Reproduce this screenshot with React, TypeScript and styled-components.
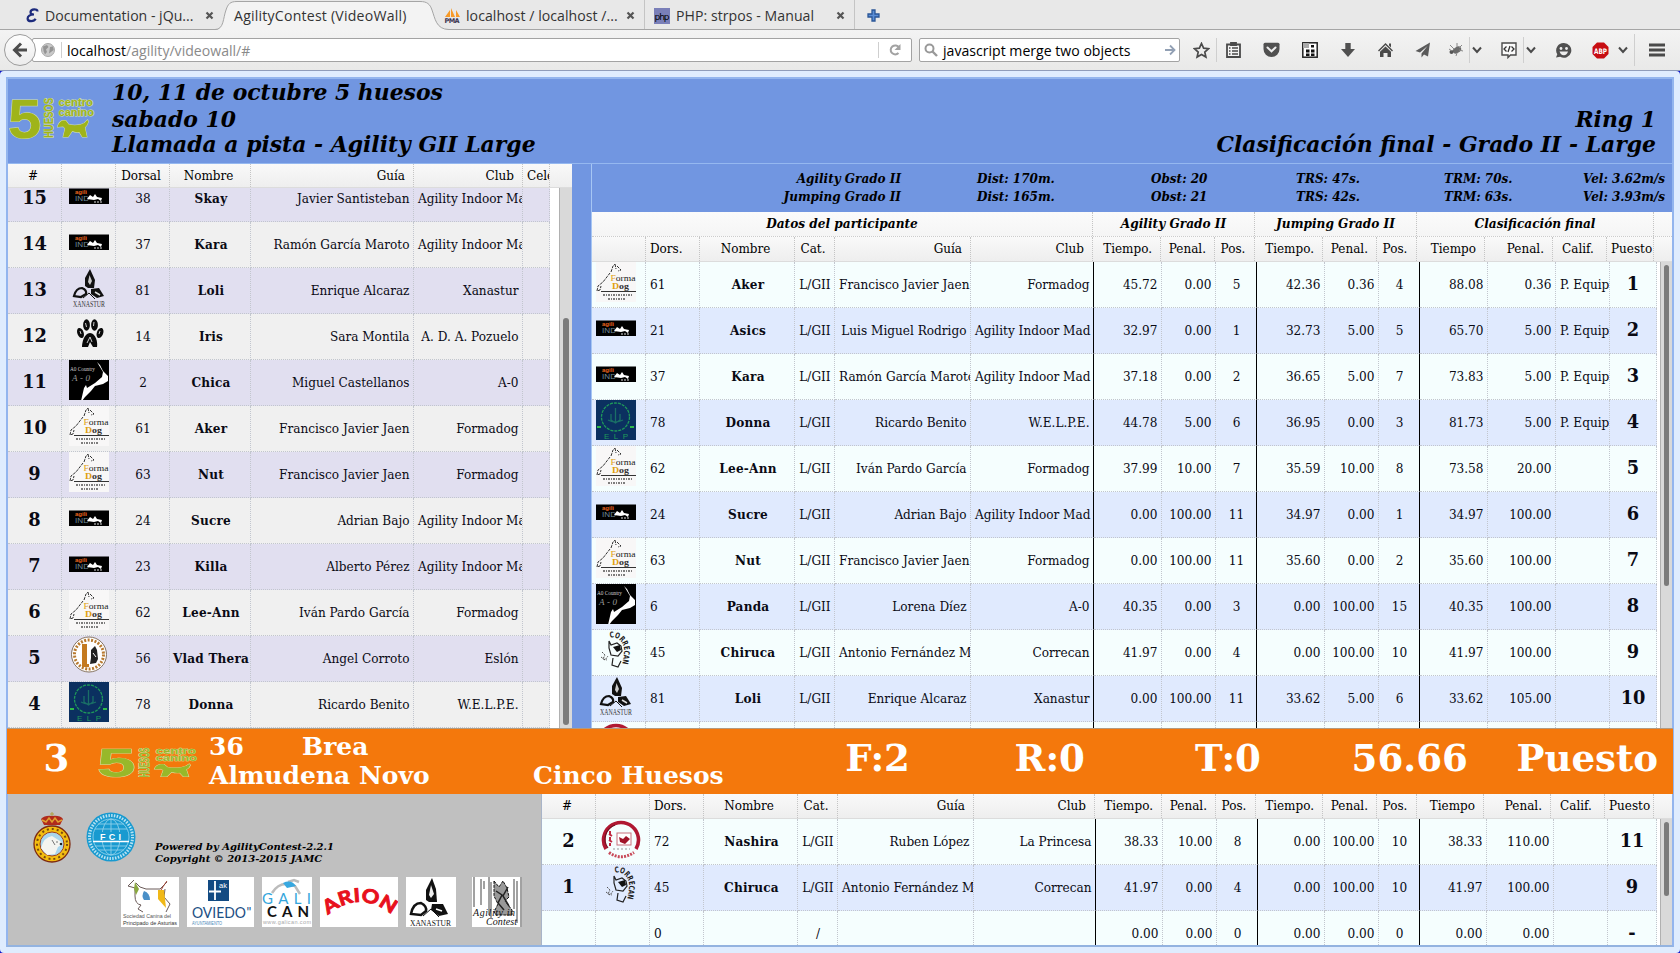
import React from 'react';
import styled, { createGlobalStyle, css } from 'styled-components';

const Global = createGlobalStyle`
  * { box-sizing: border-box; }
  html, body { margin: 0; padding: 0; }
  body { width: 1680px; height: 953px; overflow: hidden; background: #0a14c8; font-family: "DejaVu Serif", serif; }
  svg { display: block; flex: none; font-style: normal; }
`;

/* ---------- browser chrome ---------- */

const Chrome = styled.div`
  height: 71px;
  font-family: "Open Sans", "Noto Sans", sans-serif;
  font-size: 14.1px;
  color: #333;
`;
const TabBar = styled.div`
  height: 30px;
  display: flex;
  background: #e8e8e8;
  border-bottom: 1px solid #a5a5a5;
`;
const Tab = styled.div<{ $w: number; $left: number; $sep?: boolean }>`
  position: relative;
  width: ${p => p.$w}px;
  height: 29px;
  padding-left: ${p => p.$left}px;
  display: flex;
  align-items: center;
  white-space: nowrap;
  padding-top: 2px;
  ${p => p.$sep && css`border-right: 1px solid #c4c4c4;`}
`;
const TabIcon = styled.span<{ $w?: number }>`
  width: ${p => p.$w ?? 20}px;
  display: flex;
`;
const TabTitle = styled.span<{ $w: number; $ls?: number }>`
  width: ${p => p.$w}px;
  letter-spacing: ${p => p.$ls ?? 0}px;
`;
const TabShape = styled.svg`
  position: absolute;
  left: 0;
  top: 0;
  & + span { position: relative; }
`;
const Toolbar = styled.div`
  height: 41px;
  display: flex;
  align-items: center;
  background: linear-gradient(#f3f3f3, #e9e9e8);
  border-bottom: 1px solid #8f9cba;
  padding-left: 4px;
`;
const BackButton = styled.div`
  position: relative;
  z-index: 1;
  flex: none;
  width: 32px;
  height: 32px;
  margin-right: -4px;
  border-radius: 50%;
  border: 1px solid #9c9c9c;
  background: linear-gradient(#fdfdfd, #ececec);
  display: flex;
  align-items: center;
  justify-content: center;
`;
const UrlBox = styled.div`
  flex: none;
  width: 880px;
  height: 24px;
  border: 1px solid #a3a3a3;
  border-radius: 2px;
  background: #fff;
  display: flex;
  align-items: center;
  padding-left: 8px;
  color: #8a8a8a;
  b { color: #000; font-weight: 400; }
`;
const SearchBox = styled(UrlBox)`
  width: 261px;
  margin-left: 7px;
  padding-left: 4px;
  color: #000;
`;
const Sep = styled.i<{ $ml?: number; $mr?: number; $h?: number }>`
  width: 1px;
  height: ${p => p.$h ?? 16}px;
  background: #cfcfcf;
  margin-left: ${p => p.$ml ?? 0}px;
  margin-right: ${p => p.$mr ?? 0}px;
`;
const UrlText = styled.span`
  flex: 1;
  white-space: nowrap;
`;
const Tools = styled.div`
  display: flex;
  align-items: center;
`;
const Tool = styled.span<{ $w: number; $pl?: number }>`
  flex: none;
  width: ${p => p.$w}px;
  padding-left: ${p => p.$pl ?? 0}px;
  display: flex;
  justify-content: center;
`;

const CloseIcon = () => (
  <svg width="9" height="9" viewBox="0 0 9 9"><path d="M1.5 1.5l6 6M7.5 1.5l-6 6" stroke="#555" strokeWidth="2.2" /></svg>
);
const Chevron = () => (
  <svg width="10" height="8" viewBox="0 0 10 8"><path d="M1 1.5l4 4.5 4-4.5" fill="none" stroke="#4a4a4a" strokeWidth="2" /></svg>
);

function BrowserChrome() {
  return (
    <Chrome>
      <TabBar>
        <Tab $w={215} $left={25}>
          <TabIcon><svg width="14" height="15" viewBox="0 0 14 15"><path d="M12.500 3.500C12.500 .5 6 .5 5.500 4c-.1 1.800 1.500 2.500 3.500 2.500C5 6.500 2.500 8 2.600 10.600c.1 3.400 6.500 3.400 8 .2" fill="none" stroke="#1c2a7c" strokeWidth="2.200" /></svg></TabIcon>
          <TabTitle $w={160}>Documentation - jQu...</TabTitle>
          <CloseIcon />
        </Tab>
        <Tab $w={228} $left={19}>
          <TabShape width="236" height="30" viewBox="0 0 236 30">
            <path d="M0 30C9 30 8 18 11 10 13 4 15 1.500 22 1.500H205C212 1.500 215 4 217 10 220 18 221 29.500 234 29.500V30Z" fill="#f3f3f3" />
            <path d="M0 29.500C9 29.500 8 18 11 10 13 4 15 1.500 22 1.500H205C212 1.500 215 4 217 10 220 18 221 29.500 234 29.500" fill="none" stroke="#a5a5a5" />
          </TabShape>
          <TabTitle $w={182} $ls={0.22}>AgilityContest (VideoWall)</TabTitle>
          <CloseIcon />
        </Tab>
        <Tab $w={202} $left={1} $sep>
          <TabIcon $w={22}>
            <svg width="17" height="17" viewBox="0 0 17 17">
              <path d="M1 10L6 3v7zM7 10V1l4 9zM12 10V3l4 7z" fill="#f79a28" />
              <text x="0.500" y="16" fontSize="6.500" fontWeight="700" fontFamily="DejaVu Sans" fill="#3b3550" textLength="15">PMA</text>
            </svg>
          </TabIcon>
          <TabTitle $w={160} $ls={0.05}>localhost / localhost /...</TabTitle>
          <CloseIcon />
        </Tab>
        <Tab $w={210} $left={9} $sep>
          <TabIcon $w={22}>
            <svg width="16" height="16" viewBox="0 0 16 16">
              <rect width="16" height="16" fill="#7a7fb8" />
              <text x="0.500" y="11.500" fontSize="9" fontFamily="DejaVu Sans" fill="#000" textLength="15">php</text>
            </svg>
          </TabIcon>
          <TabTitle $w={160} $ls={0.05}>PHP: strpos - Manual</TabTitle>
          <CloseIcon />
        </Tab>
        <Tab $w={40} $left={12}>
          <svg width="13" height="13" viewBox="0 0 13 13"><path d="M5 1h3v4h4v3H8v4H5V8H1V5h4z" fill="#5c8fd6" stroke="#2a5696" strokeWidth="1.300" /></svg>
        </Tab>
      </TabBar>
      <Toolbar>
        <BackButton>
          <svg width="16" height="16" viewBox="0 0 16 16"><path d="M9 1.500L2.500 8 9 14.500M3 8h12" fill="none" stroke="#4c4c4c" strokeWidth="3" /></svg>
        </BackButton>
        <UrlBox>
          <svg width="14" height="14" viewBox="0 0 14 14">
            <circle cx="7" cy="7" r="6.500" fill="#c9c9c9" stroke="#aaa" />
            <path d="M2 3.500L6 2l1.500 2L5 6.500 6 9l-2 2.500L2.500 8zM9 4l3-.5.7 3.500L10 9l-2 1.500z" fill="#949494" />
          </svg>
          <Sep $ml={6} $mr={5} />
          <UrlText><b>localhost</b>/agility/videowall/#</UrlText>
          <Sep $mr={9} />
          <svg width="14" height="14" viewBox="0 0 14 14"><path d="M10.500 10A4.500 4.500 0 1 1 11 4.500" fill="none" stroke="#a2a2a2" strokeWidth="2" /><path d="M12.500 1v6h-6z" fill="#a2a2a2" /></svg>
          <Sep $ml={8} $h={0} />
        </UrlBox>
        <SearchBox>
          <svg width="14" height="14" viewBox="0 0 14 14"><circle cx="5.500" cy="5.500" r="4" fill="none" stroke="#999" strokeWidth="2" /><path d="M8.500 8.500l4.500 4.500" stroke="#999" strokeWidth="2.400" /></svg>
          <Sep $ml={4} $h={0} />
          <UrlText>javascript merge two objects</UrlText>
          <svg width="12" height="12" viewBox="0 0 12 12"><path d="M1 6h9M6 1.500L10.500 6 6 10.500" fill="none" stroke="#92a0b4" strokeWidth="1.800" /></svg>
          <Sep $ml={2} $h={0} />
        </SearchBox>
        <Tools>
          <Tool $w={36} $pl={7}>
            <svg width="17" height="17" viewBox="0 0 17 17"><path d="M8.500 1.500l2.100 4.700 5 .5-3.800 3.400 1.100 5-4.400-2.600-4.400 2.600 1.100-5L1.400 6.700l5-.5z" fill="none" stroke="#4a4a4a" strokeWidth="1.700" /></svg>
          </Tool>
          <Sep $h={24} />
          <Tool $w={32}>
            <svg width="15" height="16" viewBox="0 0 15 16"><path d="M1 2.500h13V15H1zM5 1h5v2H5z" fill="#f4f4f4" stroke="#4a4a4a" strokeWidth="1.800" /><path d="M3 6h1.500M6 6h6M3 9h1.500M6 9h6M3 12h1.500M6 12h6" stroke="#4a4a4a" strokeWidth="1.500" /></svg>
          </Tool>
          <Tool $w={44}>
            <svg width="17" height="16" viewBox="0 0 17 16"><path d="M2 .8h13q1.500 0 1.500 1.500V7a8 8 0 0 1-16 0V2.300Q.5.800 2 .8z" fill="#505050" /><path d="M4.500 5.500l4 3.800 4-3.800" fill="none" stroke="#eee" strokeWidth="2" strokeLinecap="round" /></svg>
          </Tool>
          <Tool $w={33}>
            <svg width="16" height="16" viewBox="0 0 16 16"><rect x=".8" y=".8" width="14.400" height="14.400" fill="#fff" stroke="#222" strokeWidth="1.500" /><path d="M1 1h6v5H1z" fill="#aaa" /><path d="M4 7.500h3.500v3H4zM9 7.500h3.500v3H9zM4 11.500h3.500V14H4zM9 11.500h3.500V14H9zM9 3h3v2.500H9z" fill="#111" /></svg>
          </Tool>
          <Tool $w={43}>
            <svg width="16" height="16" viewBox="0 0 16 16"><path d="M5.300 1h5.400v6H15l-7 8-7-8h4.300z" fill="#505050" /></svg>
          </Tool>
          <Tool $w={33}>
            <svg width="17" height="16" viewBox="0 0 17 16"><path d="M8.500 1L16 8.500l-1 1L8.500 3 2 9.500l-1-1z" fill="#4a4a4a" /><path d="M3 9.800L8.500 4.500 14 9.800V15h-3.500v-4h-4v4H3zM12 1.500h2v4l-2-2z" fill="#4a4a4a" /></svg>
          </Tool>
          <Tool $w={41}>
            <svg width="16" height="16" viewBox="0 0 16 16"><path d="M15 .5L.5 9l4.500 1.500L12.500 4l-6 7.500V15.500L9 12.500l4 2z" fill="#5a5a5a" /></svg>
          </Tool>
          <Tool $w={26}>
            <svg width="16" height="16" viewBox="0 0 16 16"><ellipse cx="9" cy="8" rx="4.500" ry="3" transform="rotate(-30 9 8)" fill="#6b6b6b" /><circle cx="3.500" cy="10" r="2" fill="#555" /><path d="M2 3l4 4M9 1v4M14 3l-3 3M15 9l-4-1M8 14l1-3M1 7l3 2" stroke="#888" /></svg>
          </Tool>
          <Sep $h={26} $mr={1} />
          <Tool $w={12}><Chevron /></Tool>
          <Tool $w={40} $pl={12}>
            <svg width="16" height="17" viewBox="0 0 16 17"><path d="M1 1h14v12H9.500L7 15.500V13H1z" fill="#fbfbfb" stroke="#4a4a4a" strokeWidth="1.400" /><path d="M5.500 4.500L3 7l2.500 2.500M10.500 4.500L13 7l-2.500 2.500M9 4L7 10" fill="none" stroke="#333" strokeWidth="1.300" /></svg>
          </Tool>
          <Sep $h={26} $mr={1} />
          <Tool $w={12}><Chevron /></Tool>
          <Tool $w={52}>
            <svg width="17" height="17" viewBox="0 0 17 17"><path d="M8.700 1a7.400 7.400 0 1 1-3.500 13.800L1 15.500l1.300-3.200A7.400 7.400 0 0 1 8.700 1z" fill="#505050" /><circle cx="6" cy="6.500" r="1.400" fill="#eee" /><circle cx="11.500" cy="6.500" r="1.400" fill="#eee" /><path d="M4.500 9.500h8.500q-1 3.700-4.200 3.700T4.500 9.500z" fill="#eee" /></svg>
          </Tool>
          <Tool $w={22}>
            <svg width="17" height="17" viewBox="0 0 17 17"><path d="M5 .5h7L16.500 5v7L12 16.500H5L.5 12V5z" fill="#c70d12" /><text x="2" y="11.500" fontSize="7.500" fontWeight="700" fontFamily="DejaVu Sans Condensed" fill="#fff" textLength="13" lengthAdjust="spacingAndGlyphs">ABP</text></svg>
          </Tool>
          <Tool $w={23}><Chevron /></Tool>
          <Sep $h={32} />
          <Tool $w={44}>
            <svg width="16" height="14" viewBox="0 0 16 14"><path d="M0 2h16M0 7h16M0 12h16" stroke="#4a4a4a" strokeWidth="3" /></svg>
          </Tool>
        </Tools>
      </Toolbar>
    </Chrome>
  );
}

/* ---------- club logos ---------- */

const HuesosLogo = ({ w, h, color }: { w: number; h: number; color: string }) => (
  <svg width={w} height={h} viewBox="0 0 86 42" preserveAspectRatio="none">
    <g fill={color} stroke="#d8e4a8" strokeWidth="1" paintOrder="stroke" fontFamily="Liberation Sans" fontWeight="700">
      <text x="0" y="40.500" fontSize="56" textLength="33" lengthAdjust="spacingAndGlyphs">5</text>
      <text transform="translate(44.500 41) rotate(-90)" fontSize="12.500" textLength="40" lengthAdjust="spacingAndGlyphs">HUESOS</text>
      <text x="50" y="9" fontSize="11.500" textLength="34" lengthAdjust="spacingAndGlyphs">centro</text>
      <text x="50" y="19" fontSize="11.500" textLength="35" lengthAdjust="spacingAndGlyphs">canino</text>
      <path d="M49 30q1-5 5-6.500l3 0 3 4q6 1.500 12 0 4-1 6.500-4.500l1 1.500q-1 4-3.500 6l2 9.500h-4.500l-3-5q-4 .5-7-1l-4 6h-5l2-8.500-2-2z" />
    </g>
  </svg>
);

const logos: Record<string, React.ReactNode> = {
  indoor: (
    <svg width="40" height="40" viewBox="0 0 40 40">
      <rect y="12.500" width="40" height="15.500" fill="#000" />
      <text x="6" y="17.500" fontSize="6" fontWeight="700" fontFamily="Liberation Sans" fill="#e8641e" textLength="12">agili</text>
      <text x="6" y="24.500" fontSize="8" fontFamily="Liberation Sans" fill="#6f8a9c" textLength="14" lengthAdjust="spacingAndGlyphs">IND</text>
      <path d="M18 23l3-4 3 2 2-3 2 3 5 1-1 3-3-2-4 1z" fill="#fff" />
      <path d="M25 26h9" stroke="#ddd" strokeWidth="1.200" strokeDasharray="2 1" />
    </svg>
  ),
  xana: (
    <svg width="40" height="40" viewBox="0 0 40 40">
      <path d="M21 1l-5 9v8l3 2 6 0 1-8z" fill="#111" /><path d="M20.500 7l-1.500 7 2 3 2-4z" fill="#ccc" />
      <path d="M5 28q2-8 8-8 5 2 4 6l-5 3z" fill="none" stroke="#111" strokeWidth="2.200" />
      <path d="M22 21l8-1 5 8-7 2-6-4z" fill="#111" /><path d="M26 24l5 3" stroke="#ddd" strokeWidth="1.500" />
      <path d="M14 30l6-5 6 6" fill="none" stroke="#111" />
      <text x="4" y="38.500" fontSize="7.500" fontFamily="Liberation Serif" fill="#333" textLength="32" lengthAdjust="spacingAndGlyphs">XANASTUR</text>
    </svg>
  ),
  paw: (
    <svg width="40" height="40" viewBox="0 0 40 40">
      <g fill="#0a0a0a"><ellipse cx="17.500" cy="11" rx="3.400" ry="5.800" /><ellipse cx="25.500" cy="11" rx="3.400" ry="5.800" /><ellipse cx="11.500" cy="19" rx="3.200" ry="5.200" transform="rotate(-20 11.500 19)" /><ellipse cx="31" cy="19" rx="3.200" ry="5.200" transform="rotate(20 31 19)" /><path d="M21 19c6 0 8 10 7 14h-4l-3-5-2 5h-6c0-4 2-14 8-14z" /></g>
      <path d="M18 29l3-6 2 5M16.500 9l1 4M25 8l-.5 4M11 17l1 3M31 17l-1 3" stroke="#ccc" fill="none" />
    </svg>
  ),
  a0: (
    <svg width="40" height="40" viewBox="0 0 40 40">
      <rect width="40" height="40" fill="#000" />
      <path d="M28 2l3 3 3 6 5 5v5l-5 3-8 2-4 5-6 6-3 4h-1l3-13 2-3 1 3 8-5 7-6 1-5z" fill="#fff" />
      <text x="1" y="11" fontSize="6.500" fontFamily="Liberation Serif" fill="#ccc" textLength="25" lengthAdjust="spacingAndGlyphs">A0 Country</text>
      <text x="3" y="20.500" fontSize="9" fontStyle="italic" fontFamily="Liberation Serif" fill="#999" textLength="18">A-0</text>
    </svg>
  ),
  formadog: (
    <svg width="40" height="40" viewBox="0 0 40 40">
      <rect width="40" height="40" fill="#f8f7f7" />
      <path d="M15 10l2-6 2-2M19 2l1 5M21 4l4 4-3 1M14 11L7 20l-5 4-1 5 3-1 1-4" fill="none" stroke="#333" strokeWidth="1" strokeDasharray="3 1" />
      <text x="14.500" y="18.500" fontSize="8.500" fontFamily="Liberation Serif" fill="#222" textLength="25" lengthAdjust="spacingAndGlyphs"><tspan fill="#dfa010">F</tspan>orma</text>
      <text x="16" y="27" fontSize="9" fontWeight="700" fontFamily="Liberation Serif" fill="#333" textLength="17" lengthAdjust="spacingAndGlyphs"><tspan fill="#dfa010">D</tspan>og</text>
      <path d="M5 29.500h35" stroke="#333" /><path d="M7 33h29M12 37h18" stroke="#555" strokeWidth="1.500" strokeDasharray="2 1 1 1" />
    </svg>
  ),
  eslon: (
    <svg width="40" height="40" viewBox="0 0 40 40">
      <circle cx="20" cy="18.500" r="17.500" fill="#fff" stroke="#6a5338" strokeWidth=".8" />
      <circle cx="20" cy="18.500" r="14.500" fill="none" stroke="#b87a30" strokeWidth="3" strokeDasharray="2 1.500" />
      <circle cx="20" cy="18.500" r="12" fill="#fff" />
      <path d="M13 8h5v20h2v3h-7z" fill="#c47a20" /><path d="M22 14l4-4 2 4 1 9-2 4-6 1 1-6z" fill="#222" /><path d="M24 17l3 4" stroke="#fff" />
    </svg>
  ),
  welpe: (
    <svg width="40" height="40" viewBox="0 0 40 40">
      <rect width="40" height="40" fill="#0b3060" />
      <circle cx="19.500" cy="17" r="14" fill="none" stroke="#1f9a5a" strokeWidth="1.300" strokeDasharray="3 1" />
      <path d="M19.500 8v14M15 14v6l4.500 3 4.500-3v-6M12 20q7 4 15 0" fill="none" stroke="#1a6f66" strokeWidth="1.300" />
      <text x="8" y="39" fontSize="8" fontFamily="Liberation Sans" fill="#1f9a5a" textLength="24">ELP</text>
      <path d="M1 27h4M34 27h4" stroke="#2fba4a" strokeWidth="2" />
    </svg>
  ),
  correcan: (
    <svg width="40" height="40" viewBox="0 0 40 40">
      <path id="arc" d="M14 8C22 5 29 14 28 22S27 34 24 38" fill="none" />
      <text fontSize="8" fontWeight="700" fontFamily="DejaVu Sans Condensed" fill="#222"><textPath href="#arc" textLength="35" lengthAdjust="spacingAndGlyphs">CORRECAN</textPath></text>
      <path d="M13 11l2 4 6-2 4 3 1 5-4 5-7-1-2-7zM17 28l-1 7 6 2 3-6" fill="none" stroke="#222" strokeWidth="1.200" />
      <path d="M17 17l7-2 1 5-4 2z" fill="#111" />
      <path d="M6 22l3 3-2 4 4 1M5 27l4 3 3-4" fill="none" stroke="#555" strokeDasharray="2 1" />
    </svg>
  ),
  princesa: (
    <svg width="40" height="40" viewBox="0 0 40 40">
      <path d="M5 30A17.500 17.500 0 1 1 35 30" fill="none" stroke="#b01832" strokeWidth="3.600" />
      <path d="M7 29A15 15 0 0 1 14 6" fill="none" stroke="#701020" strokeWidth="1.200" />
      <path d="M9 12v4M9 18v4M9 24v3M8 15l3 2M8 21l3 2" stroke="#c02840" strokeWidth="2" />
      <rect x="16" y="14" width="14" height="12" fill="#fff" stroke="#c8707c" />
      <path d="M18 18l4 2 3-3 4 3-5 5-5-2z" fill="#a01428" />
      <path d="M8 33.500Q20 42 33 33.500" fill="none" stroke="#c84858" strokeWidth="3" strokeDasharray="2 1.200" />
      <path d="M12 30h17" stroke="#999" strokeDasharray="2 2" />
    </svg>
  ),
};

/* ---------- video wall ---------- */

const Frame = styled.div`
  height: 882px;
  padding: 6px;
  border-radius: 4px;
  background: #dfecfe;
`;
const Wall = styled.main`
  height: 870px;
  border: 2px solid #93b5ee;
  border-bottom-color: #93b3e0;
  display: flex;
  flex-direction: column;
`;
const Title = styled.header`
  height: 85px;
  flex: none;
  display: flex;
  background: #7196e1;
  border-bottom: 1px solid #95b8f0;
  font: italic bold 21.9px/27px "DejaVu Serif", serif;
`;
const TitleLogo = styled.div`
  width: 104px;
  padding-top: 18px;
`;
const TitleText = styled.div<{ $right?: boolean }>`
  flex: 1;
  text-align: ${p => (p.$right ? 'right' : 'left')};
  padding-right: ${p => (p.$right ? 16 : 0)}px;
  white-space: nowrap;
  div:first-child { height: 27px; line-height: 26px; }
  div:last-child { line-height: 22px; }
`;
const Middle = styled.section`
  height: 564px;
  flex: none;
  display: flex;
  background: #7196e1;
`;
const CallPanel = styled.div`
  width: 564px;
  height: 564px;
  overflow: hidden;
`;
const ResultPanel = styled.div`
  width: 1081px;
  margin-left: auto;
  border-left: 1px solid #a6c6f4;
`;
const Cells = styled.div<{ $cols: string }>`
  display: grid;
  grid-template-columns: ${p => p.$cols};
`;
const Head = styled(Cells)<{ $h: number }>`
  height: ${p => p.$h}px;
  font-size: 12px;
  background: linear-gradient(#f9f9f9, #eeeeee);
  border-bottom: 1px solid #dcdcdc;
  line-height: 24px;
`;
const GroupHead = styled(Head)`
  font-weight: bold;
  font-style: italic;
  font-size: 12.150px;
  background: linear-gradient(#fbfbfb, #f5f5f5);
  border-bottom: 1px dotted #ccc;
`;
type Align = 'l' | 'c' | 'r' | 'o';
const aligns = { l: 'left', c: 'center', r: 'right', o: 'left' };
const HeadCell = styled.div<{ $a: Align; $flush?: boolean }>`
  border-right: 1px dotted #c4c4c4;
  text-align: ${p => aligns[p.$a]};
  padding: 0 ${p => (p.$a === 'r' ? 8 : p.$a === 'c' && !p.$flush ? 3 : 0)}px 0 ${p => (p.$a === 'l' || p.$a === 'o' ? 4 : 0)}px;
  overflow: hidden;
  white-space: nowrap;
`;
const Body = styled.div<{ $h: number }>`
  height: ${p => p.$h}px;
  display: flex;
  background: #fff;
  overflow: hidden;
`;
const Rows = styled.div<{ $up?: number; $tone: 'call' | 'result' }>`
  margin-top: -${p => p.$up ?? 0}px;
  flex: none;
  > div { background: ${p => (p.$tone === 'call' ? '#e1dff0' : '#f5fefe')}; }
  > div:nth-child(even) { background: ${p => (p.$tone === 'call' ? '#f0f0f0' : '#e0eafe')}; }
`;
const Row = styled(Cells)`
  height: 46px;
  font-size: 12.100px;
  line-height: 46px;
  color: #0a0a14;
`;
const Cell = styled.div<{ $a: Align; $bold?: boolean; $big?: boolean; $black?: boolean }>`
  height: 46px;
  border-right: 1px ${p => (p.$black ? 'solid #000' : 'dotted #c2c6ce')};
  border-bottom: 1px dotted #c2c6ce;
  text-align: ${p => aligns[p.$a]};
  padding: 0 ${p => (p.$a === 'c' ? 0 : p.$a === 'o' ? 0 : 3.5)}px 0 4px;
  overflow: hidden;
  white-space: nowrap;
  ${p => p.$a === 'c' && css`padding-left: 1px;`}
  ${p => p.$bold && css`font-weight: bold; letter-spacing: 0.2px; padding-left: 2px;`}
  ${p => p.$big && css`font-weight: bold; font-size: 17.800px; line-height: 44px; padding-left: 0;`}
`;
const LogoCell = styled(Cell)<{ $x: number }>`
  padding: 0 0 0 ${p => p.$x}px;
`;
const Scrollbar = styled.div<{ $top: number; $size: number; $w: number }>`
  margin-left: auto;
  width: ${p => p.$w}px;
  height: 100%;
  padding: ${p => p.$top}px 3px 0;
  background: #d9d9d9;
  border-left: 1px solid #b0b0b0;
  &::before {
    content: '';
    display: block;
    height: ${p => p.$size}px;
    border-radius: 3px;
    background: #7b7b7b;
  }
`;
const Tracks = styled.div`
  height: 48px;
  display: grid;
  grid-template-columns: 309px 76px 174px 145px 148px 139px 1fr;
  padding-top: 6px;
  font: italic bold 12px/18px "DejaVu Serif", serif;
  white-space: nowrap;
  div:first-child { text-align: right; }
`;
const TrackLine = styled.div``;

type Person = [string, string, string, string];
const A = 'Agility Indoor Mad';
const people: Record<string, Person> = {
  Skay: ['indoor', '38', 'Javier Santisteban', A],
  Kara: ['indoor', '37', 'Ramón García Maroto', A],
  Loli: ['xana', '81', 'Enrique Alcaraz', 'Xanastur'],
  Iris: ['paw', '14', 'Sara Montila', 'A. D. A. Pozuelo'],
  Chica: ['a0', '2', 'Miguel Castellanos', 'A-0'],
  Aker: ['formadog', '61', 'Francisco Javier Jaen', 'Formadog'],
  Nut: ['formadog', '63', 'Francisco Javier Jaen', 'Formadog'],
  Sucre: ['indoor', '24', 'Adrian Bajo', A],
  Killa: ['indoor', '23', 'Alberto Pérez', A],
  'Lee-Ann': ['formadog', '62', 'Iván Pardo García', 'Formadog'],
  'Vlad Thera': ['eslon', '56', 'Angel Corroto', 'Eslón'],
  Donna: ['welpe', '78', 'Ricardo Benito', 'W.E.L.P.E.'],
  Asics: ['indoor', '21', 'Luis Miguel Rodrigo', A],
  Panda: ['a0', '6', 'Lorena Díez', 'A-0'],
  Chiruca: ['correcan', '45', 'Antonio Fernández M', 'Correcan'],
  Nashira: ['princesa', '72', 'Ruben López', 'La Princesa'],
  '': ['', '0', '', ''],
};
const callOrder = ['Skay', 'Kara', 'Loli', 'Iris', 'Chica', 'Aker', 'Nut', 'Sucre', 'Killa', 'Lee-Ann', 'Vlad Thera', 'Donna'];

const results: string[][] = [
  ['Aker', '45.72', '0.00', '5', '42.36', '0.36', '4', '88.08', '0.36', 'P. Equip', '1'],
  ['Asics', '32.97', '0.00', '1', '32.73', '5.00', '5', '65.70', '5.00', 'P. Equip', '2'],
  ['Kara', '37.18', '0.00', '2', '36.65', '5.00', '7', '73.83', '5.00', 'P. Equip', '3'],
  ['Donna', '44.78', '5.00', '6', '36.95', '0.00', '3', '81.73', '5.00', 'P. Equip', '4'],
  ['Lee-Ann', '37.99', '10.00', '7', '35.59', '10.00', '8', '73.58', '20.00', '', '5'],
  ['Sucre', '0.00', '100.00', '11', '34.97', '0.00', '1', '34.97', '100.00', '', '6'],
  ['Nut', '0.00', '100.00', '11', '35.60', '0.00', '2', '35.60', '100.00', '', '7'],
  ['Panda', '40.35', '0.00', '3', '0.00', '100.00', '15', '40.35', '100.00', '', '8'],
  ['Chiruca', '41.97', '0.00', '4', '0.00', '100.00', '10', '41.97', '100.00', '', '9'],
  ['Loli', '0.00', '100.00', '11', '33.62', '5.00', '6', '33.62', '105.00', '', '10'],
];
const latest: string[][] = [
  ['Nashira', '38.33', '10.00', '8', '0.00', '100.00', '10', '38.33', '110.00', '', '11', '2'],
  ['Chiruca', '41.97', '0.00', '4', '0.00', '100.00', '10', '41.97', '100.00', '', '9', '1'],
  ['', '0.00', '0.00', '0', '0.00', '0.00', '0', '0.00', '0.00', '', '-', ''],
];

const px = (s: string) => s.split(' ').map(n => n + 'px').join(' ');
const callCols = px('54 54 54 81 163 109 27 22');
const headCols = px('54 54 95 40 136 122 68 54 40 68 54 40 68 68 54 47 18');
const bodyCols = px('54 54 95 40 136 123 68 54 41 68 54 41 68 68 54 47');
const lastHeadCols = px('54 54 54 94 40 136 121 67 54 40 67 54 40 67 67 54 49 18');
const lastBodyCols = px('54 54 54 94 40 136 122 67 54 41 67 54 41 67 67 54 49');

const heads: [string, Align][] = [
  ['', 'c'], ['Dors.', 'l'], ['Nombre', 'c'], ['Cat.', 'c'], ['Guía', 'r'], ['Club', 'r'],
  ['Tiempo.', 'r'], ['Penal.', 'r'], ['Pos.', 'c'], ['Tiempo.', 'r'], ['Penal.', 'r'], ['Pos.', 'c'],
  ['Tiempo', 'r'], ['Penal.', 'r'], ['Calif.', 'c'], ['Puesto', 'o'],
];
const valueAligns: Align[] = ['r', 'r', 'c', 'r', 'r', 'c', 'r', 'r', 'o', 'c'];

function ResultRow({ data, cols, logoX }: { data: string[]; cols: string; logoX: number }) {
  const [name, ...values] = data;
  const [logo, dorsal, guide, club] = people[name];
  const order = values[10];
  return (
    <Row $cols={cols}>
      {order !== undefined && <Cell $a="c" $big>{order}</Cell>}
      <LogoCell $a="l" $x={logoX}>{logos[logo]}</LogoCell>
      <Cell $a="l">{dorsal}</Cell>
      <Cell $a="c" $bold>{name}</Cell>
      <Cell $a="c">{name ? 'L/GII' : '/'}</Cell>
      <Cell $a="r">{guide}</Cell>
      <Cell $a="r" $black>{club}</Cell>
      {values.slice(0, 10).map((v, i) => (
        <Cell key={i} $a={valueAligns[i]} $black={i === 2 || i === 5} $big={i === 9}>{v}</Cell>
      ))}
    </Row>
  );
}

const Live = styled.section`
  height: 66px;
  flex: none;
  display: grid;
  grid-template-columns: 89px 112px 324px 220px 157px 175px 176px 207px 190px;
  background: #f4780c;
  border-top: 1px solid #b29a80;
  color: #fff;
  font: bold 25px/28.700px "DejaVu Serif", serif;
  margin: 0 -1px;
  padding: 0 1px;
  white-space: nowrap;
`;
const LiveBig = styled.div<{ $c?: boolean }>`
  font-size: 37.200px;
  line-height: 59px;
  text-align: ${p => (p.$c ? 'center' : 'right')};
  padding-left: ${p => (p.$c ? 8 : 0)}px;
`;
const LiveLogo = styled.div`
  padding-top: 18px;
`;
const LiveDog = styled.div`
  padding: 4px 0 0;
  display: grid;
  grid-template-columns: 93px 1fr;
  align-content: start;
`;
const Wide = styled.div`
  grid-column: span 2;
`;
const LiveClub = styled.div`
  padding-top: 32.700px;
`;

const Bottom = styled.section`
  height: 151px;
  display: flex;
`;
const Credits = styled.div`
  width: 534px;
  background: #c0c0c0;
  border-right: 1px solid #a8b4c8;
`;
const CreditTop = styled.div`
  display: flex;
  height: 83px;
  padding: 18px 0 0 24px;
`;
const CreditText = styled.div`
  font: italic bold 10px/12px "DejaVu Serif", serif;
  padding: 29px 0 0 19px;
  white-space: nowrap;
`;
const Sponsors = styled.div`
  display: flex;
  gap: 8px;
  padding-left: 113px;
  svg { background: #fff; }
  svg:last-child { margin-left: 8px; }
`;
const LastPanel = styled.div`
  flex: 1;
  overflow: hidden;
  background: #fff;
`;

export default function App() {
  return (
    <>
      <Global />
      <BrowserChrome />
      <Frame>
        <Wall>
          <Title>
            <TitleLogo><HuesosLogo w={87} h={42} color="#9fb41a" /></TitleLogo>
            <TitleText>
              <div>10, 11 de octubre 5 huesos</div>
              <div>sabado 10</div>
              <div>Llamada a pista - Agility GII Large</div>
            </TitleText>
            <TitleText $right>
              <div />
              <div>Ring 1</div>
              <div>Clasificación final - Grado II - Large</div>
            </TitleText>
          </Title>

          <Middle>
            <CallPanel>
              <Head $cols={callCols} $h={24}>
                <HeadCell $a="c">#</HeadCell><HeadCell $a="c" /><HeadCell $a="c">Dorsal</HeadCell><HeadCell $a="c">Nombre</HeadCell>
                <HeadCell $a="r">Guía</HeadCell><HeadCell $a="r">Club</HeadCell><HeadCell $a="o">Celo</HeadCell>
              </Head>
              <Body $h={540}>
                <Rows $up={12} $tone="call">
                  {callOrder.map((name, i) => {
                    const [logo, dorsal, guide, club] = people[name];
                    return (
                      <Row key={name} $cols={px('54 54 54 81 163 109 27')}>
                        <Cell $a="c" $big>{15 - i}</Cell>
                        <LogoCell $a="l" $x={7}>{logos[logo]}</LogoCell>
                        <Cell $a="c">{dorsal}</Cell>
                        <Cell $a="c" $bold>{name}</Cell>
                        <Cell $a="r">{guide}</Cell>
                        <Cell $a="r">{club}</Cell>
                        <Cell $a="c" />
                      </Row>
                    );
                  })}
                </Rows>
                <Scrollbar $w={13} $top={130} $size={407} />
              </Body>
            </CallPanel>
            <ResultPanel>
              <Tracks>
                <TrackLine>Agility Grado II<br />Jumping Grado II</TrackLine>
                <TrackLine />
                <TrackLine>Dist: 170m.<br />Dist: 165m.</TrackLine>
                <TrackLine>Obst: 20<br />Obst: 21</TrackLine>
                <TrackLine>TRS: 47s.<br />TRS: 42s.</TrackLine>
                <TrackLine>TRM: 70s.<br />TRM: 63s.</TrackLine>
                <TrackLine>Vel: 3.62m/s<br />Vel: 3.93m/s</TrackLine>
              </Tracks>
              <GroupHead $cols={px('501 162 162 237 18')} $h={25}>
                <HeadCell $a="c" $flush>Datos del participante</HeadCell><HeadCell $a="c" $flush>Agility Grado II</HeadCell>
                <HeadCell $a="c" $flush>Jumping Grado II</HeadCell><HeadCell $a="c" $flush>Clasificación final</HeadCell>
              </GroupHead>
              <Head $cols={headCols} $h={25}>
                {heads.map(([t, a], i) => <HeadCell key={i} $a={a}>{t}</HeadCell>)}
              </Head>
              <Body $h={466}>
                <Rows $tone="result">
                  {results.map(r => <ResultRow key={r[0]} data={r} cols={bodyCols} logoX={4} />)}
                  <ResultRow data={['Nashira', '38.33', '10.00', '8', '0.00', '100.00', '10', '38.33', '110.00', '', '11']} cols={bodyCols} logoX={4} />
                </Rows>
                <Scrollbar $w={12} $top={3} $size={321} />
              </Body>
            </ResultPanel>
          </Middle>

          <Live>
            <LiveBig $c>3</LiveBig>
            <LiveLogo><HuesosLogo w={101} h={31} color="#98b82a" /></LiveLogo>
            <LiveDog>
              <div>36</div><div>Brea</div>
              <Wide>Almudena Novo</Wide>
            </LiveDog>
            <LiveClub>Cinco Huesos</LiveClub>
            <LiveBig>F:2</LiveBig>
            <LiveBig>R:0</LiveBig>
            <LiveBig>T:0</LiveBig>
            <LiveBig>56.66</LiveBig>
            <LiveBig>Puesto</LiveBig>
          </Live>

          <Bottom>
            <Credits>
              <CreditTop>
                <svg width="40" height="51" viewBox="0 0 40 51">
                  <path d="M20 0v4M18 2h4" stroke="#b0a040" />
                  <path d="M9 7q4-4 11-3 8-1 11 3l-3 6H12z" fill="#b02a1c" /><path d="M10 8l4 2 3-4 3 4 3-4 3 4 4-2" fill="none" stroke="#e0a030" strokeWidth="1.500" />
                  <circle cx="20" cy="32" r="18" fill="#f3bd10" stroke="#7d2a12" strokeWidth="1.300" />
                  <circle cx="20" cy="32" r="15" fill="none" stroke="#7a4a10" strokeWidth="2" strokeDasharray="2 3" />
                  <circle cx="20" cy="32" r="12" fill="#a9d6ee" stroke="#a0401c" />
                  <path d="M9 36q3-11 11-12l8 5 3 3-5 3-3 7-8 1z" fill="#f4f4f0" /><circle cx="29" cy="32" r="1.300" fill="#222" /><path d="M20 28l3 5M24 30h2" stroke="#777" />
                </svg>
                <Sep $ml={13} $h={0} />
                <svg width="50" height="50" viewBox="0 0 50 50">
                  <circle cx="25" cy="25" r="24.500" fill="#189ad0" />
                  <circle cx="25" cy="25" r="21.500" fill="none" stroke="#b8e2f2" strokeWidth="3" strokeDasharray="1.500 1.300" />
                  <g fill="none" stroke="#8fd0ea" strokeWidth=".9"><circle cx="25" cy="25" r="18" /><ellipse cx="25" cy="25" rx="9" ry="18" /><path d="M25 7v36M9 17h32M9 34h32M12 38h26M12 12h26" /></g>
                  <path d="M8 20h34v9H8z" fill="#189ad0" /><path d="M7 29.500h36" stroke="#fff" strokeWidth="1.300" />
                  <text x="14" y="27.500" fontSize="9" fontWeight="700" fontFamily="Liberation Sans" fill="#fff" textLength="21">FCI</text>
                </svg>
                <CreditText>Powered by AgilityContest-2.2.1<br />Copyright © 2013-2015 JAMC</CreditText>
              </CreditTop>
              <Sponsors>
                <svg width="58" height="50" viewBox="0 0 58 50">
                  <path d="M13 3l-6 6 7 2v8q0 8 6 9l-3 4 5 3M15 6q3 5 10 6h14l7-7M44 12l-1 8 6 7-4 8" fill="none" stroke="#6a5a58" strokeWidth="1" />
                  <path d="M14 5l4 7-3 6-2-6z" fill="#8aa840" /><path d="M23 14q6 2 6 9l-6 0q-3-4 0-9z" fill="#4a90c8" /><path d="M37 13h6l2 18-8-9z" fill="#f0b818" /><path d="M40 13q5-8 6-9" stroke="#a04030" fill="none" />
                  <text x="2" y="40.500" fontSize="6" fontFamily="Liberation Sans" fill="#555" textLength="48" lengthAdjust="spacingAndGlyphs">Sociedad Canina del</text>
                  <text x="2" y="48" fontSize="6" fontFamily="Liberation Sans" fill="#333" textLength="54" lengthAdjust="spacingAndGlyphs">Principado de Asturias</text>
                </svg>
                <svg width="67" height="50" viewBox="0 0 67 50">
                  <rect x="21" y="3" width="21" height="21" fill="#124a82" />
                  <path d="M28 4v19M22 14.500h12" stroke="#fff" strokeWidth="1.800" /><text x="32" y="11" fontSize="7.500" fontFamily="Liberation Sans" fill="#fff">ak</text>
                  <text x="5" y="41" fontSize="16" fontFamily="Lato" fill="#1c4f84" textLength="54" lengthAdjust="spacingAndGlyphs">OVIEDO</text><text x="59.500" y="40" fontSize="13" fontFamily="Lato" fill="#1c4f84">"</text>
                  <text x="5" y="47.500" fontSize="5" fontFamily="Liberation Sans" fill="#4a88b8" textLength="30" lengthAdjust="spacingAndGlyphs">AYUNTAMIENTO</text>
                </svg>
                <svg width="50" height="50" viewBox="0 0 50 50">
                  <path d="M10 16q6-10 16-9l7 2 5 8M26 5l6-2 5 2" fill="none" stroke="#bcbcbc" strokeWidth="2.500" /><path d="M21 6q8-4 13 3l-9 2z" fill="#38a8e0" />
                  <text x="0" y="26.500" fontSize="15" fontFamily="Lato" fill="#35a6dc" textLength="49">GALI</text>
                  <text x="5" y="40" fontSize="15" fontWeight="700" fontFamily="Lato" fill="#111" textLength="42">CAN</text>
                  <text x="1" y="47" fontSize="5.500" fontFamily="Liberation Sans" fill="#aaa" textLength="48">www.galican.com</text>
                </svg>
                <svg width="78" height="50" viewBox="0 0 78 50">
                  <path id="arion" d="M8 38Q40 12 72 38" fill="none" />
                  <text fontSize="19" fontWeight="700" fontFamily="Lato" fill="#e8101c" stroke="#e8101c" strokeWidth=".9"><textPath href="#arion" textLength="70" lengthAdjust="spacingAndGlyphs">ARION</textPath></text>
                </svg>
                <svg width="50" height="50" viewBox="0 0 50 50">
                  <path d="M26 1l-6 12v10l3 2 8 0-1-13z" fill="#111" /><path d="M25 8l-2 10 2 3 3-4z" fill="#eee" />
                  <path d="M5 37q2-11 10-11 6 3 5 8l-5 4z" fill="none" stroke="#111" strokeWidth="2.500" /><path d="M26 27h11l5 10-9 2-8-6z" fill="#111" /><path d="M30 32l6 2" stroke="#fff" strokeWidth="1.500" /><path d="M17 39l8-7 8 8" fill="none" stroke="#111" />
                  <text x="4" y="48.500" fontSize="9" fontFamily="Liberation Serif" fill="#111" textLength="41" lengthAdjust="spacingAndGlyphs">XANASTUR</text>
                </svg>
                <svg width="50" height="50" viewBox="0 0 50 50">
                  <path d="M2 0v30M9 2v26M17 0v38M19 5v36M45 4v42M49 0v50M12 4v8M42 2v30" stroke="#444" strokeWidth="1" />
                  <path d="M22 4l5 6 4-6 4 7 2 9-4 4 7 9v5H24l-2-3 4-8-4-8z" fill="#999" stroke="#111" strokeDasharray="3 1" /><path d="M24 14l6 4-4 8 6 7M36 10l-5 9 6 10" fill="none" stroke="#222" strokeWidth="1.500" />
                  <text x="1" y="39" fontSize="10" fontStyle="italic" fontFamily="Liberation Serif" fill="#111" textLength="42">Agility in</text>
                  <text x="14" y="48" fontSize="10" fontStyle="italic" fontFamily="Liberation Serif" fill="#111" textLength="31">Contest</text>
                </svg>
              </Sponsors>
            </Credits>
            <LastPanel>
              <Head $cols={lastHeadCols} $h={25}>
                <HeadCell $a="c">#</HeadCell>
                {heads.map(([t, a], i) => <HeadCell key={i} $a={a}>{t}</HeadCell>)}
              </Head>
              <Body $h={126}>
                <Rows $tone="result">
                  {latest.map(r => <ResultRow key={r[0]} data={r} cols={lastBodyCols} logoX={5} />)}
                </Rows>
                <Scrollbar $w={12} $top={3} $size={74} />
              </Body>
            </LastPanel>
          </Bottom>
        </Wall>
      </Frame>
    </>
  );
}
